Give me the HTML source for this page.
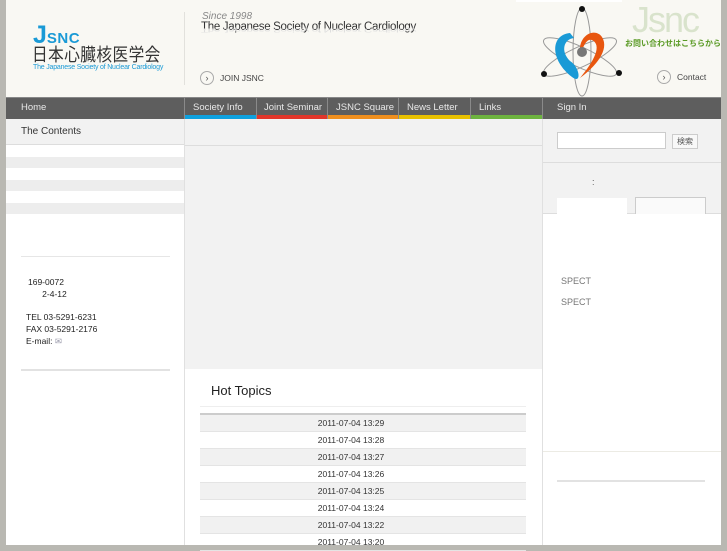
<!DOCTYPE html>
<html><head><meta charset="utf-8"><style>
*{margin:0;padding:0;box-sizing:border-box}
body{width:727px;height:545px;overflow:hidden;background:#b9b8b2;font-family:"Liberation Sans","Noto Sans CJK JP",sans-serif;position:relative}
.a{position:absolute}
.wrap{position:absolute;left:6px;top:0;width:715px;height:545px;background:#fff}
.hdr{left:0;top:0;width:715px;height:97px;background:#f9f8f3}
.nav{left:0;top:97px;width:715px;height:22px;background:#5e5e5e;border-top:1px solid #888}
.nav span{position:absolute;top:5px;font-size:9.5px;color:#e8e8e8}
.bar{position:absolute;top:115px;height:4px}
.sep{position:absolute;top:97px;width:1px;height:22px;background:#8a8a8a}
.row{position:absolute;left:200px;width:326px;height:17px;font-size:8.5px;color:#333;text-align:center;line-height:17px;border-bottom:1px solid #e4e4e4;padding-right:24px}
.g{background:#f1f1f1}
</style></head><body>
<div class="wrap">
<div class="a hdr"></div>
<div class="a" style="left:178px;top:12px;width:1px;height:73px;background:#e2e1dc"></div>
<div class="a" style="left:27px;top:23px;font-size:25px;font-weight:bold;color:#1a9ad6;line-height:24px">J<span style="font-size:15px;letter-spacing:0.5px">SNC</span></div>
<div class="a" style="left:26px;top:45px;font-size:18px;color:#333;letter-spacing:0.5px;line-height:20px;transform:scaleX(0.87);transform-origin:left">日本心臓核医学会</div>
<div class="a" style="left:27px;top:64px;font-size:7px;color:#1a9ad6;letter-spacing:-0.2px">The Japanese Society of Nuclear Cardiology</div>
<div class="a" style="left:196px;top:11px;font-size:10px;font-style:italic;color:#888">Since 1998</div>
<div class="a" style="left:195px;top:21px;font-size:11.5px;color:#333;letter-spacing:-0.3px">The Japanese Society of Nuclear Cardiology</div>
<div class="a" style="left:195px;top:33px;font-size:11.5px;color:#ddd;letter-spacing:-0.3px;transform:scaleY(-0.5);transform-origin:top">The Japanese Society of Nuclear Cardiology</div>
<div class="a" style="left:194px;top:71px;width:14px;height:14px;border:1px solid #aaa;border-radius:50%;font-size:9px;text-align:center;line-height:12px;color:#555">›</div>
<div class="a" style="left:214px;top:73px;font-size:8.5px;color:#444">JOIN JSNC</div>
<div class="a" style="left:510px;top:0;width:106px;height:2px;background:#fff"></div>
<svg class="a" style="left:534px;top:5px" width="82" height="92" viewBox="0 0 82 92">
<g fill="none" stroke="#999" stroke-width="1"><ellipse cx="42" cy="47" rx="9" ry="44"/><ellipse cx="40" cy="52" rx="40" ry="10" transform="rotate(25 40 52)"/><ellipse cx="40" cy="52" rx="40" ry="10" transform="rotate(-25 40 52)"/></g>
<path d="M30 28 C10 30 10 55 32 72 C42 80 40 62 30 56 C20 46 24 34 34 33 Z" fill="#1a9ad6"/>
<path d="M40 48 C38 30 55 22 62 32 C70 45 55 62 40 73 C55 55 62 40 52 35 C46 33 44 42 40 48 Z" fill="#e8560f"/>
<circle cx="42" cy="47" r="5" fill="#777"/><circle cx="42" cy="4" r="3" fill="#111"/><circle cx="4" cy="69" r="3" fill="#111"/><circle cx="79" cy="68" r="3" fill="#111"/>
</svg>
<div class="a" style="left:626px;top:2px;font-size:36px;color:#d9e3cc;letter-spacing:-2px;line-height:36px">Jsnc</div>
<div class="a" style="left:619px;top:38px;font-size:8px;color:#5a9a24;font-weight:bold">お問い合わせはこちらから</div>
<div class="a" style="left:651px;top:70px;width:14px;height:14px;border:1px solid #aaa;border-radius:50%;font-size:9px;text-align:center;line-height:12px;color:#555">›</div>
<div class="a" style="left:671px;top:72px;font-size:8.5px;color:#444">Contact</div>

<div class="a nav"></div>
<div class="nav a" style="background:none;border:none">
<span style="left:15px">Home</span><span style="left:187px">Society Info</span><span style="left:258px">Joint Seminar</span><span style="left:330px">JSNC Square</span><span style="left:401px">News Letter</span><span style="left:473px">Links</span><span style="left:551px">Sign In</span></div>
<div class="sep" style="left:178px"></div><div class="sep" style="left:250px"></div><div class="sep" style="left:321px"></div><div class="sep" style="left:392px"></div><div class="sep" style="left:464px"></div><div class="sep" style="left:536px"></div>
<div class="bar" style="left:179px;width:71px;background:#0ea1df"></div>
<div class="bar" style="left:251px;width:70px;background:#e0362b"></div>
<div class="bar" style="left:322px;width:70px;background:#ef8f1e"></div>
<div class="bar" style="left:393px;width:71px;background:#e7c000"></div>
<div class="bar" style="left:465px;width:71px;background:#6db33f"></div>

<div class="a" style="left:0;top:119px;width:178px;height:26px;background:#f2f2f2;border-bottom:1px solid #ddd"></div>
<div class="a" style="left:15px;top:126px;font-size:10px;color:#333">The Contents</div>
<div class="a" style="left:0;top:157px;width:178px;height:11px;background:#ededed"></div>
<div class="a" style="left:0;top:180px;width:178px;height:11px;background:#ededed"></div>
<div class="a" style="left:0;top:203px;width:178px;height:11px;background:#ededed"></div>
<div class="a" style="left:15px;top:256px;width:149px;height:1px;background:#e6e6e6"></div>
<div class="a" style="left:22px;top:276px;font-size:8.5px;color:#222;line-height:12px">169-0072<br>&nbsp;&nbsp;&nbsp;&nbsp;&nbsp;&nbsp;2-4-12</div>
<div class="a" style="left:20px;top:311px;font-size:8.5px;color:#222;line-height:12px">TEL 03-5291-6231<br>FAX 03-5291-2176<br>E-mail: <span style="color:#99a">✉</span></div>
<div class="a" style="left:15px;top:369px;width:149px;height:2px;background:#e2e2e2"></div>
<div class="a" style="left:178px;top:119px;width:1px;height:426px;background:#e0e0e0"></div>

<div class="a" style="left:179px;top:119px;width:357px;height:250px;background:#f2f2f2"></div>
<div class="a" style="left:179px;top:145px;width:357px;height:1px;background:#ddd"></div>
<div class="a" style="left:205px;top:383px;font-size:13px;color:#222">Hot Topics</div>
<div class="a" style="left:194px;top:406px;width:326px;height:1px;background:#eee"></div>
<div class="a" style="left:194px;top:413px;width:326px;height:2px;background:#ccc"></div>
</div>
<div class="row g" style="top:415px">2011-07-04 13:29</div>
<div class="row" style="top:432px">2011-07-04 13:28</div>
<div class="row g" style="top:449px">2011-07-04 13:27</div>
<div class="row" style="top:466px">2011-07-04 13:26</div>
<div class="row g" style="top:483px">2011-07-04 13:25</div>
<div class="row" style="top:500px">2011-07-04 13:24</div>
<div class="row g" style="top:517px">2011-07-04 13:22</div>
<div class="row" style="top:534px">2011-07-04 13:20</div>

<div class="a" style="left:542px;top:119px;width:179px;height:44px;background:#f2f2f2;border-bottom:1px solid #ddd"></div>
<div class="a" style="left:557px;top:132px;width:109px;height:17px;background:#fff;border:1px solid #ccc"></div>
<div class="a" style="left:672px;top:134px;width:26px;height:15px;background:#f8f8f8;border:1px solid #ccc;font-size:8px;color:#555;text-align:center;line-height:13px">検索</div>
<div class="a" style="left:542px;top:163px;width:179px;height:51px;background:#f2f2f2;border-bottom:1px solid #ddd"></div>
<div class="a" style="left:592px;top:177px;font-size:9px;color:#555">:</div>
<div class="a" style="left:557px;top:198px;width:70px;height:17px;background:#fff"></div>
<div class="a" style="left:635px;top:197px;width:71px;height:17px;background:#fafafa;border:1px solid #ccc;border-bottom:none"></div>
<div class="a" style="left:561px;top:276px;font-size:9px;color:#777">SPECT</div>
<div class="a" style="left:561px;top:297px;font-size:9px;color:#777">SPECT</div>
<div class="a" style="left:542px;top:451px;width:179px;height:1px;background:#ecebe4"></div>
<div class="a" style="left:557px;top:480px;width:148px;height:2px;background:#e2e2e2"></div>
<div class="a" style="left:542px;top:119px;width:1px;height:426px;background:#e0e0e0"></div>
<div class="a" style="left:721px;top:0;width:6px;height:545px;background:#b9b8b2"></div>
</body></html>
